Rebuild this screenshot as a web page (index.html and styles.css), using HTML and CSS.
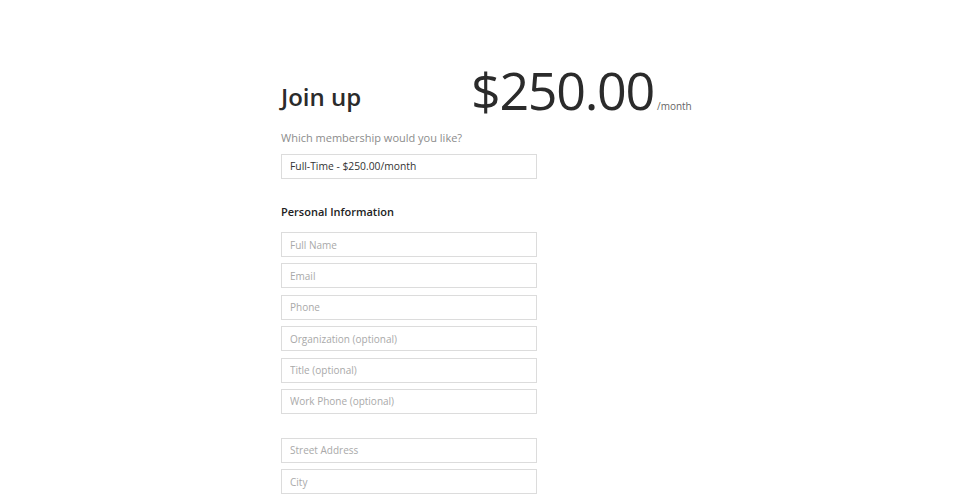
FILE: index.html
```html
<!DOCTYPE html>
<html>
<head>
<meta charset="utf-8">
<link rel="stylesheet" href="styles.css">
</head>
<body>
<div class="wrap">
  <div class="head">
    <h1 class="title">Join up</h1>
    <div class="price"><span class="amount">$250.00</span><span class="per">/month</span></div>
  </div>
  <label class="label">Which membership would you like?</label>
  <div class="select">Full-Time - $250.00/month</div>
  <h2 class="section">Personal Information</h2>
  <div class="group">
    <input class="field" placeholder="Full Name">
    <input class="field" placeholder="Email">
    <input class="field" placeholder="Phone">
    <input class="field" placeholder="Organization (optional)">
    <input class="field" placeholder="Title (optional)">
    <input class="field" placeholder="Work Phone (optional)">
  </div>
  <div class="group">
    <input class="field" placeholder="Street Address">
    <input class="field" placeholder="City">
  </div>
</div>
</body>
</html>
```
FILE: styles.css
```css
html, body {
  margin: 0;
  padding: 0;
  background: #fff;
  font-family: "Open Sans", "Liberation Sans", sans-serif;
  color: #333;
}
.wrap {
  width: 398px;
  margin: 0 auto;
  padding-top: 64px;
  display: flex;
  flex-direction: column;
}
.head {
  display: flex;
  align-items: flex-end;
  height: 52px;
}
.title {
  flex: 0 0 191px;
  width: 191px;
  margin: 0 0 7px;
  font-size: 24px;
  line-height: 24px;
  font-weight: 600;
  color: #2b2b2b;
}
.price {
  flex: 0 0 auto;
  display: flex;
  align-items: baseline;
  margin-left: -1px;
}
.amount {
  font-size: 52px;
  line-height: 52px;
  font-weight: 400;
  color: #2b2b2b;
  letter-spacing: -1.3px;
}
.per {
  font-size: 10px;
  color: #666;
  margin-left: 3px;
}
.label {
  margin-top: 14px;
  font-size: 11px;
  color: #8c8c8c;
  line-height: 16px;
}
.select {
  margin-top: 8px;
  width: 256px;
  height: 25px;
  box-sizing: border-box;
  border: 1px solid #dcdcdc;
  padding: 0 8px;
  font-size: 10.3px;
  line-height: 23px;
  color: #333;
}
.section {
  margin: 25px 0 12px;
  font-size: 11px;
  font-weight: 600;
  color: #222;
  line-height: 16px;
}
.group {
  display: flex;
  flex-direction: column;
  gap: 6.4px;
  margin-bottom: 24px;
}
.field {
  width: 256px;
  height: 25px;
  box-sizing: border-box;
  border: 1px solid #dcdcdc;
  border-radius: 0;
  padding: 0 8px;
  margin: 0;
  font-family: inherit;
  font-size: 10px;
  color: #333;
  outline: none;
}
.field::placeholder {
  color: #a9a9a9;
}
```
